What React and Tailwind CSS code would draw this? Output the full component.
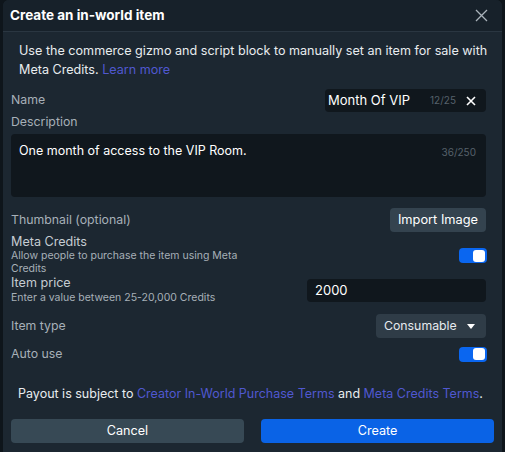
import { useState } from "react";

function Toggle({ on }) {
  return (
    <div className={`w-[28px] h-[15px] rounded-[4px] flex items-center px-[2px] ${on ? "bg-[#0a66f0] justify-end" : "bg-[#44525e] justify-start"}`}>
      <div className="w-[12px] h-[12px] rounded-[3px] bg-white" />
    </div>
  );
}

export default function App() {
  const [credits] = useState(true);
  const [autoUse] = useState(true);

  return (
    <div className="w-[505px] h-[452px] bg-[#0e151b] font-['Inter',sans-serif] text-white overflow-hidden">
      <div className="ml-[3px] w-[499px] h-[452px] bg-[#1c2731] rounded-t-[6px] flex flex-col">
        {/* Header */}
        <div className="h-[32px] shrink-0 bg-[#17212a] rounded-t-[6px] border-b border-[#2a3641] flex items-center justify-between pl-[7px] pr-[14px]">
          <span className="text-[13.5px] font-bold">Create an in-world item</span>
          <svg width="13" height="13" viewBox="0 0 13 13" className="text-[#aab3bb]">
            <path d="M1 1L12 12M12 1L1 12" stroke="currentColor" strokeWidth="1.3" />
          </svg>
        </div>

        {/* Intro */}
        <p className="pl-[16px] pr-[8px] pt-[9px] text-[12.6px] leading-[19px] text-[#e8ecef]">
          Use the commerce gizmo and script block to manually set an item for sale with Meta Credits.{" "}
          <span className="text-[#5058d0]">Learn more</span>
        </p>

        <div className="pl-[8px] pr-[16px] mt-[10px] flex flex-col">
          {/* Name */}
          <div className="flex items-center justify-between h-[23px]">
            <span className="text-[12.3px] text-[#a7b0b8]">Name</span>
            <div className="w-[161px] h-[23px] bg-[#10171d] rounded-[4px] flex items-center pl-[7px] pr-[10px] overflow-hidden">
              <span className="text-[13px] text-white whitespace-nowrap -ml-[4px]">Month Of VIP</span>
              <span className="ml-auto text-[10px] text-[#56616b]">12/25</span>
              <svg width="10" height="10" viewBox="0 0 10 10" className="ml-[10px]">
                <path d="M1 1L9 9M9 1L1 9" stroke="white" strokeWidth="1.6" />
              </svg>
            </div>
          </div>

          {/* Description */}
          <span className="text-[12.3px] leading-[16px] text-[#a7b0b8] mt-[2px]">Description</span>
          <div className="mt-[4px] h-[63px] bg-[#10171d] rounded-[4px] flex items-start justify-between pl-[8px] pr-[10px] pt-[8px]">
            <span className="text-[12.5px] text-white">One month of access to the VIP Room.</span>
            <span className="text-[10px] text-[#56616b] mt-[3px]">36/250</span>
          </div>

          {/* Thumbnail */}
          <div className="flex items-center justify-between mt-[11px] h-[24px]">
            <span className="text-[12.3px] text-[#a7b0b8]">Thumbnail (optional)</span>
            <div className="w-[96px] h-[24px] bg-[#34434f] rounded-[4px] flex items-center justify-center text-[12.8px] text-white">
              Import Image
            </div>
          </div>

          {/* Meta Credits */}
          <div className="flex items-start justify-between mt-[2px]">
            <div className="flex flex-col">
              <span className="text-[12.6px] text-[#c5ccd2] leading-[15px]">Meta Credits</span>
              <span className="text-[10.5px] text-[#a7b0b8] leading-[13px] w-[250px]">Allow people to purchase the item using Meta Credits</span>
            </div>
            <div className="mt-[14px] mr-[-1px]">
              <Toggle on={credits} />
            </div>
          </div>

          {/* Item price */}
          <div className="flex items-start justify-between">
            <div className="flex flex-col">
              <span className="text-[12.6px] text-[#c5ccd2] leading-[15px]">Item price</span>
              <span className="text-[10.5px] text-[#a7b0b8] leading-[13px] mt-[1px]">Enter a value between 25-20,000 Credits</span>
            </div>
            <div className="mt-[4px] w-[179px] h-[23px] bg-[#10171d] rounded-[4px] flex items-center px-[8px] text-[13px]">2000</div>
          </div>

          {/* Item type */}
          <div className="flex items-center justify-between mt-[10px] h-[24px]">
            <span className="text-[12.3px] text-[#a7b0b8]">Item type</span>
            <div className="w-[110px] h-[24px] bg-[#2f3c47] rounded-[4px] flex items-center justify-between pl-[8px] pr-[11px] text-[12.3px] text-[#e6eaee]">
              Consumable
              <svg width="8" height="5" viewBox="0 0 8 5"><path d="M0 0H8L4 5Z" fill="white" /></svg>
            </div>
          </div>

          {/* Auto use */}
          <div className="flex items-center justify-between mt-[8px] h-[16px]">
            <span className="text-[12.3px] text-[#a7b0b8]">Auto use</span>
            <div className="mr-[-1px]">
              <Toggle on={autoUse} />
            </div>
          </div>

          {/* Payout */}
          <p className="text-center text-[12.5px] leading-[18px] text-[#e8ecef] mt-[23px] ml-[2px] mr-[-2px]">
            Payout is subject to <span className="text-[#5058d0]">Creator In-World Purchase Terms</span> and{" "}
            <span className="text-[#5058d0]">Meta Credits Terms</span>.
          </p>

          {/* Buttons */}
          <div className="flex gap-[17px] mt-[16px] w-[483px]">
            <button className="w-[233px] h-[24px] rounded-[4px] bg-[#374955] text-[12.6px] text-white">Cancel</button>
            <button className="w-[233px] h-[24px] rounded-[4px] bg-[#0a63e6] text-[12.6px] text-white">Create</button>
          </div>
        </div>
      </div>
    </div>
  );
}
